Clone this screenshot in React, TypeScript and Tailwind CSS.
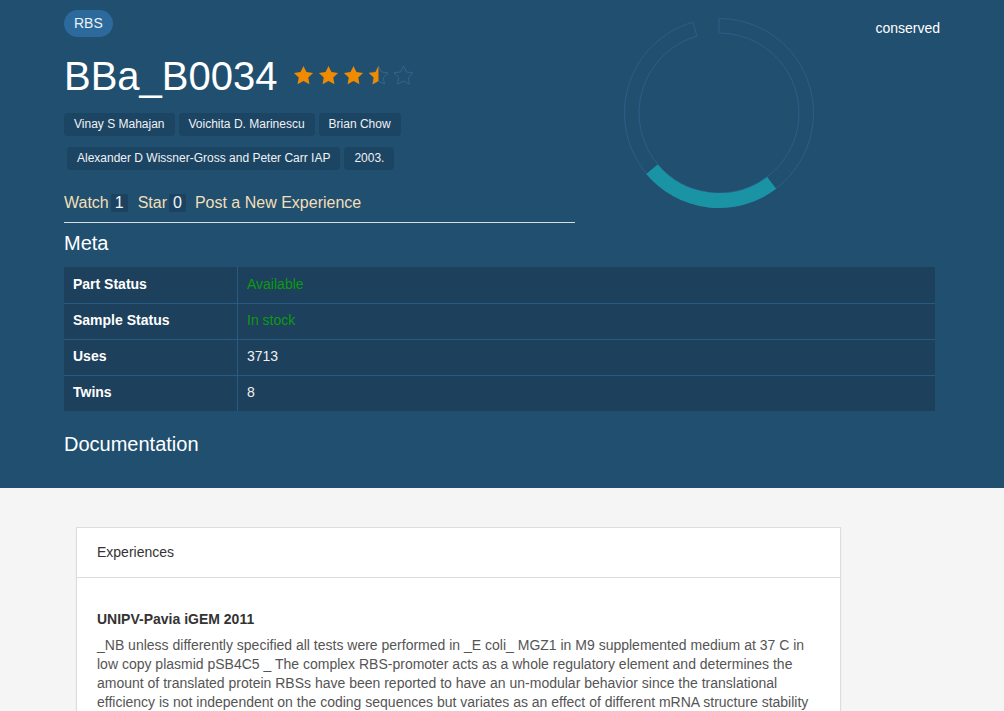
const STAR = 'M12 2l3.09 6.26L22 9.27l-5 4.87 1.18 6.88L12 17.77l-6.18 3.25L7 14.14 2 9.27l6.91-1.01L12 2z';

const Star = ({ fill }: { fill: 'full' | 'half' | 'empty' }) => (
  <svg width="23" height="23" viewBox="0 0 24 24" className="shrink-0">
    <defs>
      <clipPath id="half-left">
        <rect x="0" y="0" width="12" height="24" />
      </clipPath>
    </defs>
    {fill !== 'full' && <path d={STAR} fill="none" stroke="#33668d" strokeWidth="1" />}
    {fill === 'full' && <path d={STAR} fill="#f08a00" />}
    {fill === 'half' && <path d={STAR} fill="#f08a00" clipPath="url(#half-left)" />}
  </svg>
);

const Tag = ({ children }: { children: string }) => (
  <span className="h-[23px] px-[10px] rounded-[4px] bg-[#1c4463] text-[12px] leading-[23px] text-[#eef2f5]">{children}</span>
);

const Count = ({ n }: { n: number }) => (
  <span className="ml-[2px] h-[18px] px-[4px] rounded-[2px] bg-[#1b4260] leading-[18px] text-[#f4f4f4]">{n}</span>
);

const META = [
  { label: 'Part Status', value: 'Available', green: true },
  { label: 'Sample Status', value: 'In stock', green: true },
  { label: 'Uses', value: '3713' },
  { label: 'Twins', value: '8' },
];

const Ring = () => (
  <svg width="192" height="192" viewBox="0 0 192 192" className="shrink-0 ml-[48px] mt-[7px]">
    <path
      d="M 96 1.5 A 94.5 94.5 0 1 1 69.95 5.16 L 73.95 19.10 A 80 80 0 1 0 96 16 Z"
      fill="none"
      stroke="#2b5f86"
      strokeWidth="1"
    />
    <path d="M 148.66 165.88 A 87.5 87.5 0 0 1 28.97 152.24" fill="none" stroke="#1a94a4" strokeWidth="15" />
  </svg>
);

export default function App() {
  return (
    <div className="min-h-screen bg-[#f5f5f5] font-['Liberation_Sans',Arial,sans-serif]">
      {/* header */}
      <div className="bg-[#214f70] pt-[10px] pb-[33px] pl-[64px] pr-[64px] text-white">
        <div className="flex">
          <div className="w-[511px] shrink-0">
            <div className="inline-block h-[27px] px-[10px] rounded-full bg-[#2c6a9c] text-[14px] leading-[27px] text-[#eaf1f7]">RBS</div>

            <div className="mt-[17px] flex items-center h-[44px]">
              <h1 className="text-[40px] leading-[44px] text-white">BBa_B0034</h1>
              <div className="ml-[14px] flex gap-[2px] mt-[-2px]">
                <Star fill="full" />
                <Star fill="full" />
                <Star fill="full" />
                <Star fill="half" />
                <Star fill="empty" />
              </div>
            </div>

            <div className="mt-[15px] flex gap-[4px]">
              <Tag>Vinay S Mahajan</Tag>
              <Tag>Voichita D. Marinescu</Tag>
              <Tag>Brian Chow</Tag>
            </div>
            <div className="mt-[11px] ml-[3px] flex gap-[4px]">
              <Tag>Alexander D Wissner-Gross and Peter Carr IAP</Tag>
              <Tag>2003.</Tag>
            </div>

            <div className="mt-[22px] flex items-center h-[22px] text-[16px] text-[#f2dfb8]">
              <span>Watch</span>
              <Count n={1} />
              <span className="ml-[10px]">Star</span>
              <Count n={0} />
              <span className="ml-[9px]">Post a New Experience</span>
            </div>
            <div className="mt-[8px] border-t border-[#d9dee4]" />
          </div>

          <Ring />
          <div className="ml-auto mt-[8px] text-[14px] leading-[20px] text-white">conserved</div>
        </div>

        <h2 className="mt-[9px] text-[20px] leading-[22px] text-white">Meta</h2>

        <div className="mt-[13px] mr-[5px] bg-[#1d405c]">
          {META.map((row, i) => (
            <div key={row.label} className={`flex h-[36px] ${i > 0 ? 'border-t border-[#265b83]' : ''}`}>
              <div className="w-[174px] pl-[9px] pb-[2px] flex items-center border-r border-[#265b83] text-[14px] font-bold text-white">
                {row.label}
              </div>
              <div className={`pl-[9px] pb-[2px] flex items-center text-[14px] ${row.green ? 'text-[#0d9a12]' : 'text-[#f0f0f0]'}`}>
                {row.value}
              </div>
            </div>
          ))}
        </div>

        <h2 className="mt-[22px] text-[20px] leading-[22px] text-white">Documentation</h2>
      </div>

      {/* experiences */}
      <div className="pt-[39px] pl-[76px] pb-[40px]">
        <div className="w-[765px] bg-white border border-[#dddddd] shadow-[0_1px_2px_rgba(0,0,0,0.05)]">
          <div className="h-[50px] px-[20px] flex items-center border-b border-[#dddddd] text-[14px] text-[#333]">
            Experiences
          </div>
          <div className="px-[20px] pt-[31px]">
            <h3 className="text-[14px] leading-[20px] font-bold text-[#333]">UNIPV-Pavia iGEM 2011</h3>
            <p className="mt-[7px] text-[14px] leading-[19px] text-[#555]">
              _NB unless differently specified all tests were performed in _E coli_ MGZ1 in M9 supplemented medium at 37 C in
              low copy plasmid pSB4C5 _ The complex RBS-promoter acts as a whole regulatory element and determines the
              amount of translated protein RBSs have been reported to have an un-modular behavior since the translational
              efficiency is not independent on the coding sequences but variates as an effect of different mRNA structure stability
              and this fact can significantly affect the expected output of the system in different contexts.
            </p>
          </div>
        </div>
      </div>
    </div>
  );
}
